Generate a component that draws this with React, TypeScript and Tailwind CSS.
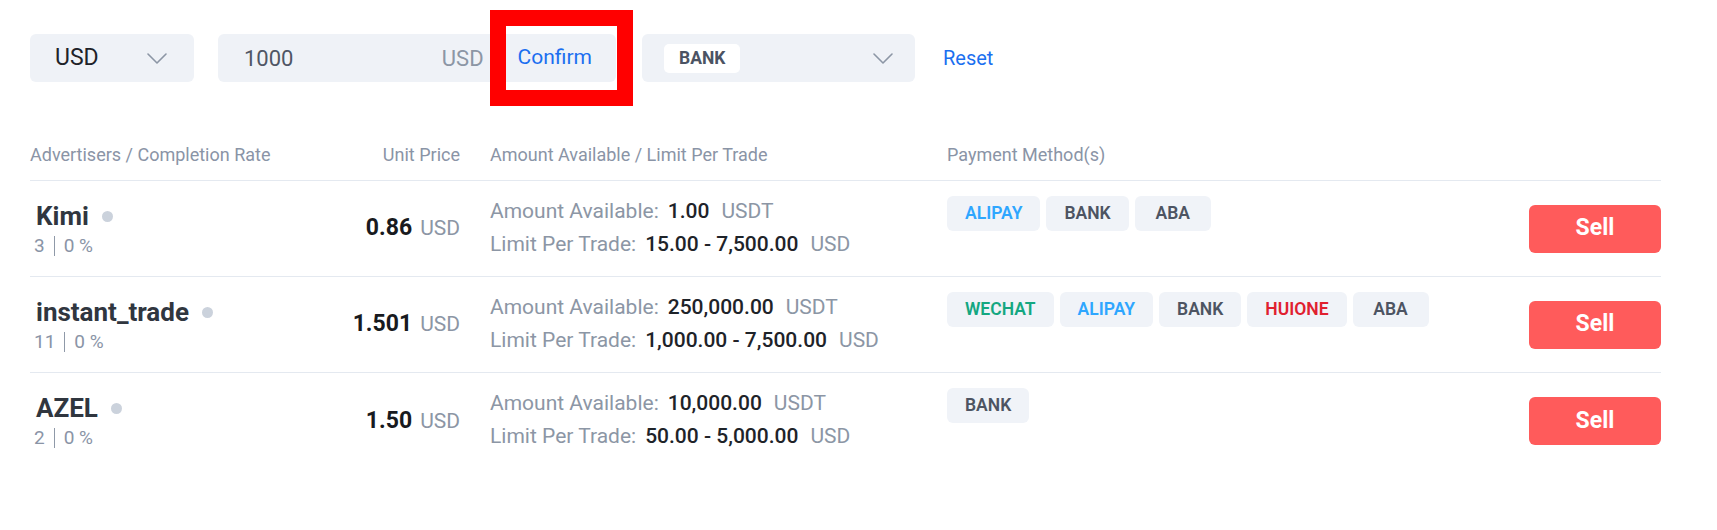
const methodColor: Record<string, string> = {
  ALIPAY: "text-[#2ea6ff]",
  WECHAT: "text-[#14a781]",
  HUIONE: "text-[#e0202f]",
  BANK: "text-[#4d5462]",
  ABA: "text-[#4d5462]",
};

const ads = [
  { name: "Kimi", orders: 3, price: "0.86", avail: "1.00", limit: "15.00 - 7,500.00", methods: ["ALIPAY", "BANK", "ABA"] },
  { name: "instant_trade", orders: 11, price: "1.501", avail: "250,000.00", limit: "1,000.00 - 7,500.00", methods: ["WECHAT", "ALIPAY", "BANK", "HUIONE", "ABA"] },
  { name: "AZEL", orders: 2, price: "1.50", avail: "10,000.00", limit: "50.00 - 5,000.00", methods: ["BANK"] },
];

function Chevron() {
  return (
    <svg width="20" height="11" viewBox="0 0 20 11" fill="none">
      <path d="M1 1l9 9 9-9" stroke="#8c96a5" strokeWidth="1.6" strokeLinecap="round" strokeLinejoin="round" />
    </svg>
  );
}

export default function App() {
  return (
    <div className="relative w-[1717px] h-[530px] bg-white px-[30px] font-['Roboto',sans-serif]">
      {/* filters */}
      <div className="flex items-center pt-[34px]">
        <div className="w-[164px] h-[48px] rounded-[6px] bg-[#eff2f7] flex items-center justify-between pl-[25px] pr-[27px]">
          <span className="text-[23px] text-[#1e2329]">USD</span>
          <Chevron />
        </div>
        <div className="ml-[24px] w-[398px] h-[48px] rounded-[6px] bg-[#eff2f7] flex items-center pl-[26px] pr-[24px]">
          <span className="flex-1 text-[22px] text-[#4f5665]">1000</span>
          <span className="text-[22px] text-[#8c96a5]">USD</span>
          <span className="ml-[34px] text-[21px] text-[#1b6ff0]">Confirm</span>
        </div>
        <div className="ml-[26px] w-[273px] h-[48px] rounded-[6px] bg-[#eff2f7] flex items-center justify-between pl-[22px] pr-[22px]">
          <span className="h-[29px] px-[15px] rounded-[5px] bg-white flex items-center text-[17.5px] font-bold text-[#4b5363]">BANK</span>
          <Chevron />
        </div>
        <a className="ml-[28px] text-[20px] text-[#1b6ff0]">Reset</a>
      </div>

      {/* highlight */}
      <div className="absolute left-[490px] top-[10px] w-[143px] h-[96px] border-[16px] border-[#ff0000]" />

      {/* table */}
      <div className="w-[1631px] mt-[47px]">
        <div className="grid grid-cols-[240px_190px_487px_1fr_132px] h-[52px] items-center border-b border-[#e4e9f0] text-[18px] text-[#8a94a6] whitespace-nowrap">
          <div>Advertisers / Completion Rate</div>
          <div className="text-right">Unit Price</div>
          <div className="pl-[30px]">Amount Available / Limit Per Trade</div>
          <div>Payment Method(s)</div>
          <div />
        </div>

        {ads.map((ad, i) => (
          <div
            key={ad.name}
            className={`grid grid-cols-[240px_190px_487px_1fr_132px] h-[96px] ${i < ads.length - 1 ? "border-b border-[#e4e9f0]" : ""}`}
          >
            <div className="pt-[20px] pl-[6px]">
              <div className="flex items-center leading-[30px]">
                <span className="text-[26px] font-bold text-[#30363f]">{ad.name}</span>
                <span className="ml-[13px] w-[11px] h-[11px] rounded-full bg-[#cbd2dc]" />
              </div>
              <div className="mt-[2px] -ml-[2px] flex items-center leading-[26px] text-[19px] text-[#8a94a6]">
                <span>{ad.orders}</span>
                <span className="mx-[9px] w-px h-[20px] bg-[#8f99a8]" />
                <span>0 %</span>
              </div>
            </div>

            <div className="self-center text-right">
              <span className="text-[23px] font-bold text-[#181a20]">{ad.price}</span>
              <span className="ml-[8px] text-[21px] text-[#8c96a5]">USD</span>
            </div>

            <div className="pl-[30px] pt-[14px] leading-[33px] text-[21px] text-[#8c96a5] whitespace-nowrap">
              <div>
                Amount Available:
                <span className="ml-[9px] font-medium text-[#1e2329]">{ad.avail}</span>
                <span className="ml-[12px]">USDT</span>
              </div>
              <div>
                Limit Per Trade:
                <span className="ml-[9px] font-medium text-[#1e2329]">{ad.limit}</span>
                <span className="ml-[12px]">USD</span>
              </div>
            </div>

            <div className="pt-[15px] flex items-start gap-[6px]">
              {ad.methods.map((m) => (
                <span
                  key={m}
                  className={`h-[35px] min-w-[76px] px-[18px] rounded-[6px] bg-[#f0f3f8] flex items-center justify-center text-[17.5px] font-semibold ${methodColor[m]}`}
                >
                  {m}
                </span>
              ))}
            </div>

            <div className="self-center">
              <button className="w-[132px] h-[48px] rounded-[6px] bg-[#ff5b5b] text-white text-[23px] font-bold">Sell</button>
            </div>
          </div>
        ))}
      </div>
    </div>
  );
}
